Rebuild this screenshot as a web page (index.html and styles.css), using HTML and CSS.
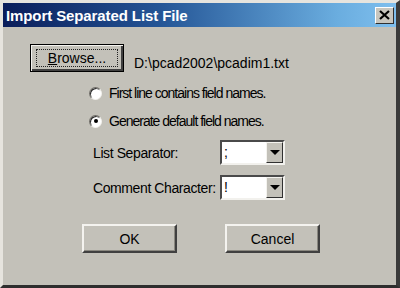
FILE: index.html
```html
<!DOCTYPE html>
<html lang="en">
<head>
  <meta charset="UTF-8"/>
  <title>Import Separated List File</title>
  <link rel="stylesheet" href="styles.css">
</head>
<body>
  <div class="window">
    <div class="titlebar">
      <span class="title">Import Separated List File</span>
      <button class="close-btn" aria-label="Close">
        <svg width="11" height="10" viewBox="0 0 11 10">
          <path d="M1 1 L10 9 M10 1 L1 9" stroke="#000" stroke-width="2.2"/>
        </svg>
      </button>
    </div>

    <div class="content">
      <div class="file-row">
        <button class="btn btn-default"><span class="focus"><u>B</u>rowse...</span></button>
        <span class="path">D:\pcad2002\pcadim1.txt</span>
      </div>

      <div class="radio-row">
        <span class="radio"></span>
        <span>First line contains field names.</span>
      </div>
      <div class="radio-row">
        <span class="radio checked"></span>
        <span>Generate default field names.</span>
      </div>

      <div class="field-row first">
        <span class="field-label">List Separator:</span>
        <div class="combo">
          <span class="combo-value">;</span>
          <span class="combo-arrow"></span>
        </div>
      </div>
      <div class="field-row">
        <span class="field-label">Comment Character:</span>
        <div class="combo">
          <span class="combo-value">!</span>
          <span class="combo-arrow"></span>
        </div>
      </div>

      <div class="button-row">
        <button class="btn">OK</button>
        <button class="btn">Cancel</button>
      </div>
    </div>
  </div>
</body>
</html>
```

FILE: styles.css
```css
body { margin: 0; font-family: "Liberation Sans", Arial, sans-serif; font-size: 13px; color: #000; }

.window {
  width: 400px; height: 288px; box-sizing: border-box;
  background: #c3c1b9;
  border-top: 3px solid #e6e4de; border-left: 3px solid #e6e4de;
  border-right: 4px solid #3a3a3a; border-bottom: 3px solid #2e2e2e;
  display: flex; flex-direction: column;
}

.titlebar {
  height: 24px; flex: none;
  background: linear-gradient(to right, #0a1d5a 0%, #245596 40%, #6aaddf 85%, #7fbfee 100%);
  display: flex; align-items: center; justify-content: space-between;
  padding: 0 0 0 3px;
}
.title {
  color: #fff; font-weight: bold; font-size: 15px; letter-spacing: -0.1px;
}
.close-btn {
  width: 19px; height: 17px; margin-right: 2px; padding: 0;
  background: #c8c6be;
  border: 1px solid; border-color: #fff #303030 #303030 #fff;
  display: flex; align-items: center; justify-content: center;
}

.content { padding: 17px 0 0 27px; display: flex; flex-direction: column; }

.btn {
  font-family: inherit; font-size: 14px; color: #000;
  background: #c3c1b9; width: 95px; height: 29px; padding: 0;
  border: 2px solid; border-color: #f4f3ef #404040 #404040 #f4f3ef;
  box-shadow: inset -1px -1px 0 #8a8880;
}
.btn-default {
  width: 94px; height: 28px; border: 1px solid #000;
  box-shadow: inset 1px 1px 0 #f4f3ef, inset -2px -2px 0 #404040;
  display: flex; align-items: center; justify-content: center;
}
.focus {
  display: block; width: 82px; height: 18px; line-height: 17px;
  border: 1px dotted #222; box-sizing: border-box;
}

.file-row { display: flex; align-items: flex-end; gap: 10px; }
.path { padding-bottom: 1px; font-size: 14px; }

.radio-row {
  display: flex; align-items: center; gap: 7px; white-space: nowrap;
  margin-left: 59px; height: 14px; margin-top: 14px;
  font-size: 14px; letter-spacing: -1px;
}
.radio-row + .radio-row { margin-top: 14px; }
.radio {
  width: 13px; height: 13px; border-radius: 50%; box-sizing: border-box; flex: none;
  background: #fff;
  border: 1px solid; border-color: #6e6c66 #f2f1ed #f2f1ed #6e6c66;
  box-shadow: inset 1px 1px 0 #2a2a2a;
  display: flex; align-items: center; justify-content: center;
}
.radio.checked::after {
  content: ""; width: 4px; height: 4px; border-radius: 50%; background: #000;
}

.field-row {
  display: flex; align-items: center; margin-left: 63px; margin-top: 10px;
  font-size: 14px; letter-spacing: -0.4px; white-space: nowrap;
}
.field-row.first { margin-top: 12px; }
.field-label { width: 127px; }
.combo {
  width: 65px; height: 25px; box-sizing: border-box;
  background: #fff; display: flex; align-items: stretch;
  border: 2px solid; border-color: #4a4a4a #f2f1ed #f2f1ed #4a4a4a;
}
.combo-value { flex: 1; padding-left: 2px; line-height: 21px; font-size: 14px; }
.combo-arrow {
  width: 17px; background: #c3c1b9; box-sizing: border-box;
  border: 1px solid; border-color: #f4f3ef #303030 #303030 #f4f3ef;
  display: flex; align-items: center; justify-content: center;
}
.combo-arrow::after {
  content: ""; border-left: 5px solid transparent; border-right: 5px solid transparent;
  border-top: 5px solid #000;
}

.button-row { display: flex; gap: 48px; margin: 24px 0 0 52px; }
```
